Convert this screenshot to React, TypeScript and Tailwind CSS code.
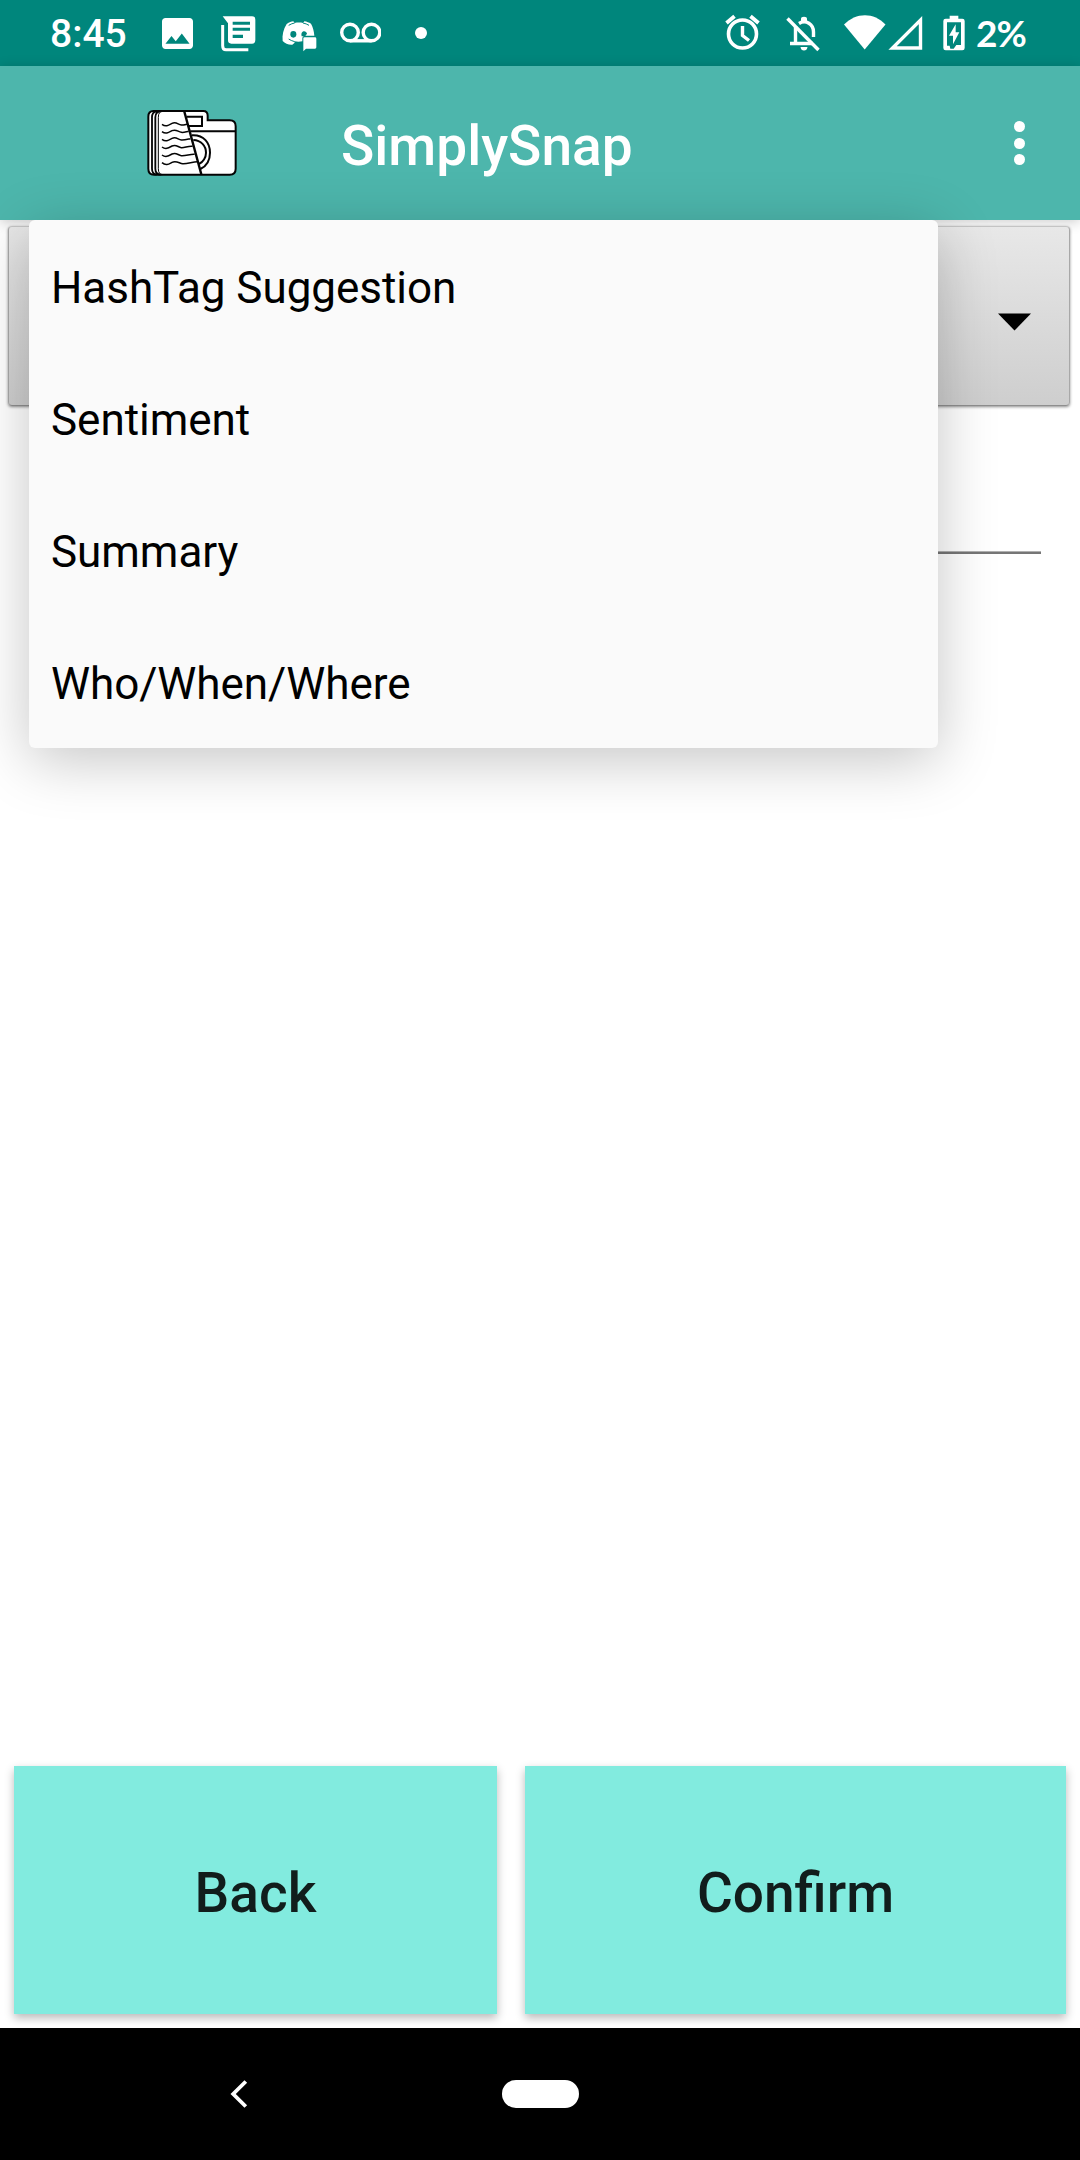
const options = ["HashTag Suggestion", "Sentiment", "Summary", "Who/When/Where"];

function StatusBar() {
  return (
    <div className="flex h-[66px] items-start bg-[#00867c] text-white">
      <span className="ml-[50px] mt-[12px] w-[78px] whitespace-nowrap font-['Roboto',sans-serif] text-[39px] font-medium leading-[44px]">
        8:45
      </span>
      {/* picture */}
      <svg className="ml-[34px] mt-[18px] h-[31px] w-[31px] shrink-0" viewBox="3 3 18 18" fill="currentColor">
        <path d="M21 19V5c0-1.100-.9-2-2-2H5c-1.100 0-2 .9-2 2v14c0 1.100.9 2 2 2h14c1.100 0 2-.9 2-2zM8.500 13.500l2.500 3.010L14.500 12l4.500 6H5l3.500-4.500z" />
      </svg>
      {/* news */}
      <svg className="ml-[28px] mt-[16px] h-[36px] w-[36px] shrink-0" viewBox="0 0 108 108" fill="none">
        <path d="M4 27 V89 Q4 101 14 101 H81" stroke="currentColor" strokeWidth="9" transform="translate(1 0)" />
        <path fill="currentColor" fillRule="evenodd" d="M5 1 H93 Q103 1 103 11 V72 Q103 83 93 83 H31 Q21 83 21 73 V22 Z M35 17 V26 H87 V17 Z M35 35 V44 H87 V35 Z M35 56 V66 H66 V56 Z" />
      </svg>
      {/* chat controller */}
      <svg className="ml-[25px] mt-[20px] h-[33px] w-[36px] shrink-0" viewBox="0 0 108 99" fill="none">
        <path
          fill="currentColor"
          d="M14 12 C22 7 28 5 34 4 L38 9 C46 7 56 7 63 9 L67 4 C74 5 81 8 87 11 C93 22 96 34 97 47 L68 47 Q61 48 61 54 V64 C54 66 45 66 37 64 L38 68 L31 74 C20 75 9 70 2 63 C0 45 4 27 14 12 Z"
        />
        <path d="M20 16 Q30 10 38 9 M63 9 Q73 11 81 16 M20 57 Q27 62 38 65" stroke="#00867c" strokeWidth="3" />
        <ellipse cx="34" cy="43" rx="9" ry="10" fill="#00867c" />
        <path d="M59 49 C54 31 73 29 75 41 L70 48 Z" fill="#00867c" />
        <path d="M64 55 Q64 52 68 52 H99 Q103 52 103 56 V82 Q103 86 99 86 H72 L64 94 Z" fill="currentColor" />
      </svg>
      {/* voicemail */}
      <svg className="ml-[21px] mt-[22px] h-[21px] w-[42px] shrink-0" viewBox="0 0 42 21" fill="none" stroke="currentColor" strokeWidth="3.400">
        <circle cx="11" cy="10.500" r="8.300" />
        <circle cx="32.500" cy="10.500" r="8.300" />
        <path d="M11 18.800H32.500" />
      </svg>
      <span className="ml-[34px] mt-[27px] size-3 shrink-0 rounded-full bg-white" />

      {/* alarm */}
      <svg className="ml-auto mt-[14px] h-[37px] w-[35px] shrink-0" viewBox="0 0 35 37" fill="none" stroke="currentColor">
        <circle cx="17.500" cy="20" r="14" strokeWidth="3.600" />
        <path d="M17.500 12V21.500L24 26.500" strokeWidth="3.400" />
        <path d="M1.500 9L9.500 2.200M33.500 9L25.500 2.200" strokeWidth="3.800" />
      </svg>
      {/* silent bell */}
      <svg className="ml-[26px] mt-[16px] h-[36px] w-[34px] shrink-0" viewBox="0 0 34 36" fill="none" stroke="currentColor">
        <path d="M1.500 2.500L32.500 34" strokeWidth="3.400" />
        <path d="M9.500 10V27.500M4 27.500H27M13 7.500C20 3 27.500 8.500 27.500 16V21" strokeWidth="3.400" />
        <path d="M15 6V3Q15 .8 18 .8T21 3V6ZM14.500 31H21.500Q21 34.500 18 34.500T14.500 31Z" fill="currentColor" stroke="none" />
      </svg>
      {/* wifi */}
      <svg className="ml-[24px] mt-[15px] h-[35px] w-[42px] shrink-0" viewBox="0 0 42 35" fill="currentColor">
        <path d="M0 9.500C12-3 30-3 41.500 9.500L20.700 34.500Z" />
      </svg>
      {/* cell signal */}
      <svg className="ml-[2px] mt-[15px] h-[36px] w-[36px] shrink-0" viewBox="0 0 36 36" fill="none" stroke="currentColor" strokeWidth="3.400">
        <path d="M4.500 33H32.500V5Z" />
      </svg>
      {/* charging battery */}
      <svg className="ml-[19px] mt-[15px] h-[36px] w-[22px] shrink-0" viewBox="0 0 66 108" fill="currentColor">
        <path
          fillRule="evenodd"
          d="M20 2 H46 V11 H58 Q65 11 65 18 V99 Q65 106 58 106 H8 Q1 106 1 99 V18 Q1 11 8 11 H20 Z M12 22 V92 H20 L22 101 H32 L40 90 H54 V22 Z"
        />
        <path d="M38 28 L18 62 H30 V88 L49 52 H38 Z" />
      </svg>
      <span className="ml-[11px] mt-[11px] w-[104px] whitespace-nowrap font-['Lato',sans-serif] text-[37px] font-bold leading-[44px] tracking-[-1px]">
        2%
      </span>
    </div>
  );
}

function Logo() {
  return (
    <svg className="h-[66px] w-[90px] shrink-0" viewBox="51 60 270 198" fill="none" stroke="#050505" strokeWidth="6">
      <path fill="#fff" d="M70 63 H220 Q233 63 233 77 V91 H299 Q317 91 317 109 V236 Q317 254 299 254 H72 Q55 254 55 236 V80 Q55 63 70 63 Z" />
      <path d="M80 64 Q66 66 66 82 V236 Q66 252 80 254 M94 64 Q76 64 76 82 V236 Q76 254 94 254" strokeWidth="5.500" />
      <path d="M98 64 Q85 64 85 82 V236 Q85 254 98 254" strokeWidth="3" />
      <path d="M163 65 L214 253" strokeWidth="7" />
      <path d="M170 80 H216 V108 H176 M181 124 H316" />
      <path d="M186 136 C222 134 240 159 240 188 C240 210 230 228 211 237 M190 150 C213 151 228 167 228 188 C228 203 219 217 207 222" />
      <g strokeWidth="4.500">
        <path d="M96 103 C108 112 117 105 126 100 C139 94 144 104 154 105 C162 106 165 103 171 103" />
        <path d="M96 125 C108 134 117 127 126 122 C139 116 144 126 154 127 C162 128 169 125 176 124" />
        <path d="M96 148 C108 157 117 150 126 145 C139 139 144 149 154 150 C162 151 172 148 181 146" />
        <path d="M96 171 C108 180 117 173 126 168 C139 162 144 172 154 173 C164 174 175 167 188 169" />
        <path d="M96 195 C108 204 117 197 126 192 C139 186 144 196 154 197 C168 198 180 192 194 193" />
        <path d="M96 218 C108 229 117 222 126 217 C139 211 148 220 158 221 C172 222 188 215 202 215" />
      </g>
    </svg>
  );
}

export default function App() {
  return (
    <div className="flex h-[2160px] w-[1080px] flex-col overflow-hidden bg-white font-['Roboto',sans-serif]">
      <StatusBar />

      <header className="relative flex h-[154px] shrink-0 items-center bg-[#4db6ac] pl-[147px] pr-[55px] text-white shadow-[0_2px_12px_rgba(0,0,0,0.200)]">
        <Logo />
        <h1 className="ml-[104px] mt-[6px] text-[55px] font-medium leading-[64px]">SimplySnap</h1>
        <div className="ml-auto flex flex-col gap-[5.500px]">
          <span className="size-[11px] rounded-full bg-white" />
          <span className="size-[11px] rounded-full bg-white" />
          <span className="size-[11px] rounded-full bg-white" />
        </div>
      </header>

      <main className="relative flex flex-1 flex-col">
        <div className="ml-[8px] mr-[10px] mt-[6px] flex h-[180px] items-start justify-end rounded-[4px] border-[1.500px] border-t-[#c4c4c4] border-r-[#a8a8a8] border-b-[#8e8e8e] border-l-[#a8a8a8] bg-linear-to-b from-[#e8e8e8] to-[#cecece] pr-[38px] pt-[86px] shadow-[0_1px_3px_rgba(0,0,0,0.450)]">
          <svg className="h-[18px] w-[33px]" viewBox="0 0 33 18">
            <path d="M0 .5H33L16.500 17.500Z" fill="#000" />
          </svg>
        </div>
        <div className="ml-[39px] mr-[39px] mt-[145px] h-[3px] border-t border-[#b0b0b0] bg-[#767676]" />

        <ul className="absolute left-[29px] top-0 z-10 w-[909px] rounded-[6px] bg-[#fafafa] shadow-[0_12px_60px_rgba(0,0,0,0.230)]">
          {options.map((label) => (
            <li key={label} className="flex h-[132px] items-center pl-[22px] pt-[3px] text-[44px] leading-[52px] tracking-[-0.040px] text-black">
              {label}
            </li>
          ))}
        </ul>

        <div className="mt-auto flex h-[262px] gap-[28px] pb-[14px] pl-[14px] pr-[14px] text-[55px] font-medium text-[#111d1c]">
          <button className="w-[483px] bg-[#82ebdf] pt-[6px] shadow-[0_4px_9px_rgba(0,0,0,0.280)]">Back</button>
          <button className="w-[541px] bg-[#82ebdf] pt-[6px] shadow-[0_4px_9px_rgba(0,0,0,0.280)]">Confirm</button>
        </div>
      </main>

      <nav className="relative flex h-[132px] shrink-0 items-center bg-black pl-[230px]">
        <svg className="h-[28px] w-[18px]" viewBox="0 0 18 28" fill="none" stroke="#fff" strokeWidth="3.800">
          <path d="M15.800 1.500L3.200 14L15.800 26.500" />
        </svg>
        <span className="ml-[254px] h-[28px] w-[77px] rounded-full bg-white" />
      </nav>
    </div>
  );
}
